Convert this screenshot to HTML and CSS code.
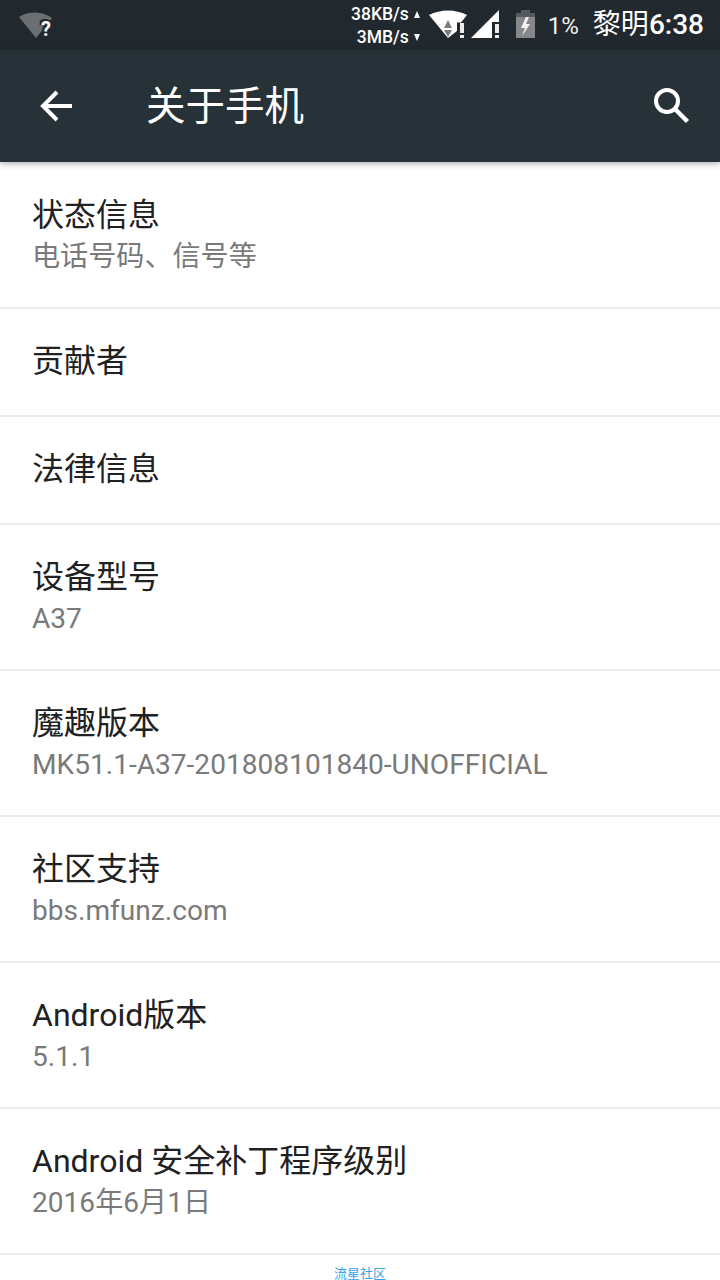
FILE: index.html
```html
<!DOCTYPE html>
<html lang="zh-CN">
<head>
<meta charset="utf-8">
<title>关于手机</title>
<link rel="stylesheet" href="styles.css">
</head>
<body>
<div class="status">
  <svg class="wifi-off" width="36" height="30" viewBox="0 0 36 30">
    <path d="M1 6 A 30 30 0 0 1 34 7 L18 27Z" fill="#6c6f71"/>
  </svg>
  <span class="unknown">?</span>
  <div class="status-right">
    <div class="speed">
      <div class="speed-row"><span>38KB/s</span><i class="tri up"></i></div>
      <div class="speed-row"><span>3MB/s</span><i class="tri down"></i></div>
    </div>
    <svg class="wifi" width="40" height="30" viewBox="0 0 40 30">
      <path d="M0 5 A 42 42 0 0 1 38 5 L32 12.500 H28 V21 L19 28Z" fill="#fff"/>
      <path d="M19 10 L23 18 H15Z" fill="#7a7c7e"/>
      <path d="M15 20 H23 L19 27Z" fill="#7a7c7e"/>
      <rect x="31" y="13" width="4" height="10" fill="#ececec"/>
      <rect x="31" y="25" width="4" height="3" fill="#ececec"/>
    </svg>
    <svg class="signal" width="30" height="30" viewBox="0 0 30 30">
      <path d="M0 28 L28 0 V12 H21 V28Z" fill="#fff"/>
      <rect x="24" y="14" width="4" height="9" fill="#ececec"/>
      <rect x="24" y="25" width="4" height="3" fill="#ececec"/>
    </svg>
    <svg class="battery" width="20" height="30" viewBox="0 0 20 30">
      <path d="M5 0 h9 v3 h5 v25 h-19 v-25 h5Z" fill="#85878a"/>
      <path d="M5 0 h9 v3 h5 v4 h-19 v-4 h5Z" fill="#565a5d"/>
      <path d="M10 7 L5 18 H9 L6 26 L14 14 H10 L13 7Z" fill="#f4f4f4"/>
    </svg>
    <span class="percent">1%</span>
    <span class="clock"><span class="ampm">黎明</span>6:38</span>
  </div>
</div>

<header class="appbar">
  <svg class="back" width="48" height="48" viewBox="0 0 48 48">
    <path d="M40 23 H11 M25 9 L11 23 L25 37" fill="none" stroke="#fff" stroke-width="4"/>
  </svg>
  <h1 class="title">关于手机</h1>
  <svg class="search" width="48" height="48" viewBox="0 0 48 48">
    <circle cx="19" cy="18" r="11" fill="none" stroke="#fff" stroke-width="4"/>
    <path d="M27 26 L39.500 38.500" stroke="#fff" stroke-width="4.500" fill="none"/>
  </svg>
</header>

<main class="list">
  <section class="item two"><div class="label">状态信息</div><div class="sub">电话号码、信号等</div></section>
  <section class="item one"><div class="label">贡献者</div></section>
  <section class="item one"><div class="label">法律信息</div></section>
  <section class="item two"><div class="label">设备型号</div><div class="sub">A37</div></section>
  <section class="item two"><div class="label">魔趣版本</div><div class="sub">MK51.1-A37-201808101840-UNOFFICIAL</div></section>
  <section class="item two"><div class="label">社区支持</div><div class="sub">bbs.mfunz.com</div></section>
  <section class="item two"><div class="label">Android版本</div><div class="sub">5.1.1</div></section>
  <section class="item two"><div class="label">Android 安全补丁程序级别</div><div class="sub">2016年6月1日</div></section>
</main>
<footer class="mark">流星社区</footer>
</body>
</html>
```

FILE: styles.css
```css
* { box-sizing: border-box; }

html, body {
  margin: 0;
  padding: 0;
}

body {
  width: 720px;
  height: 1280px;
  overflow: hidden;
  background: #fff;
  font-family: Roboto, "Noto Sans CJK SC", sans-serif;
  display: flex;
  flex-direction: column;
}

/* status bar */
.status {
  height: 50px;
  flex: none;
  background: #22292e;
  display: flex;
  align-items: flex-start;
  color: #fff;
  position: relative;
}

.wifi-off {
  margin: 11px 0 0 18px;
  flex: none;
}

/* the "?" badge sits over the wifi fan, with a dark halo cut into it */
.unknown {
  position: absolute;
  left: 41px;
  top: 17px;
  font-size: 20px;
  line-height: 24px;
  font-weight: 700;
  color: #fff;
  text-shadow: -2px 0 0 #22292e, 0 -2px 0 #22292e, -2px -2px 0 #22292e, 2px -1px 0 #22292e;
}

.status-right {
  margin-left: auto;
  display: flex;
  align-items: flex-start;
}

.speed {
  width: 84px;
  margin-top: 3px;
  font-size: 17.500px;
  line-height: 23px;
  font-weight: 500;
}

.speed-row {
  display: flex;
  justify-content: flex-end;
  align-items: center;
  gap: 5px;
}

.tri {
  width: 0;
  height: 0;
  border-left: 3.500px solid transparent;
  border-right: 3.500px solid transparent;
}

.tri.up { border-bottom: 7px solid #fff; }
.tri.down { border-top: 7px solid #fff; }

.wifi {
  margin: 10px 0 0 9px;
  flex: none;
}

.signal {
  margin: 10px 0 0 2px;
  flex: none;
}

.battery {
  margin: 10px 0 0 15px;
  flex: none;
}

.percent {
  margin: 13px 0 0 12px;
  font-size: 24px;
  line-height: 26px;
  color: #f0f0f0;
  width: 35px;
}

.clock {
  margin: 9px 16px 0 10px;
  font-size: 28px;
  line-height: 32px;
  font-weight: 500;
  white-space: nowrap;
}

.ampm { font-weight: 400; }

/* app bar */
.appbar {
  height: 112px;
  flex: none;
  background: #263238;
  display: flex;
  align-items: center;
  padding: 0 24px 0 32px;
  box-shadow: 0 2px 6px rgba(0, 0, 0, 0.3);
  position: relative;
  z-index: 1;
}

.back {
  flex: none;
  margin-top: 1px;
}

.title {
  margin: 1px 0 0 66px;
  font-size: 39.500px;
  line-height: 48px;
  font-weight: 400;
  color: #fff;
  flex: 1;
}

.search {
  flex: none;
  margin-top: 1px;
}

/* settings rows */
.list {
  flex: none;
  margin-top: 1px;
}

.item {
  padding: 0 32px;
  border-bottom: 2px solid #ececec;
  display: flex;
  flex-direction: column;
}

.item.two {
  height: 146px;
  padding-top: 30px;
}

.item.one {
  height: 108px;
  padding-top: 30px;
}

.label {
  font-size: 32px;
  line-height: 44px;
  color: #212121;
}

.sub {
  font-size: 28.100px;
  line-height: 40px;
  color: #7a7a7a;
}

.mark {
  text-align: center;
  font-size: 13px;
  line-height: 16px;
  color: #3aa0e8;
  padding-top: 11px;
}
```
